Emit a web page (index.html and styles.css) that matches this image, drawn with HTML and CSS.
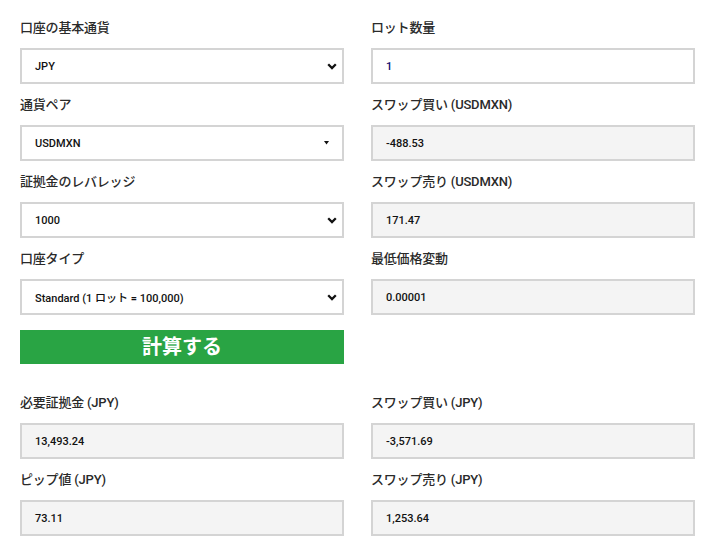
FILE: index.html
```html
<!DOCTYPE html>
<html lang="ja">
<head>
<meta charset="utf-8">
<link rel="stylesheet" href="styles.css">
</head>
<body>
<div class="calc">
  <div class="grid">
    <div class="field">
      <div class="label">口座の基本通貨</div>
      <div class="box select"><span>JPY</span>
        <svg class="chev" width="10" height="7" viewBox="0 0 10 7"><path d="M1.2 1.2 L5 5 L8.8 1.2" fill="none" stroke="#111" stroke-width="2.3"/></svg>
      </div>
    </div>
    <div class="field">
      <div class="label">ロット数量</div>
      <div class="box input"><span class="lot">1</span></div>
    </div>

    <div class="field">
      <div class="label">通貨ペア</div>
      <div class="box select"><span>USDMXN</span>
        <svg class="tri" width="5" height="4" viewBox="0 0 5 4"><path d="M0 0 L5 0 L2.5 3.5 Z" fill="#111"/></svg>
      </div>
    </div>
    <div class="field">
      <div class="label">スワップ買い (USDMXN)</div>
      <div class="box ro"><span>-488.53</span></div>
    </div>

    <div class="field">
      <div class="label">証拠金のレバレッジ</div>
      <div class="box select"><span>1000</span>
        <svg class="chev" width="10" height="7" viewBox="0 0 10 7"><path d="M1.2 1.2 L5 5 L8.8 1.2" fill="none" stroke="#111" stroke-width="2.3"/></svg>
      </div>
    </div>
    <div class="field">
      <div class="label">スワップ売り (USDMXN)</div>
      <div class="box ro"><span>171.47</span></div>
    </div>

    <div class="field">
      <div class="label">口座タイプ</div>
      <div class="box select"><span>Standard (1 ロット = 100,000)</span>
        <svg class="chev" width="10" height="7" viewBox="0 0 10 7"><path d="M1.2 1.2 L5 5 L8.8 1.2" fill="none" stroke="#111" stroke-width="2.3"/></svg>
      </div>
    </div>
    <div class="field">
      <div class="label">最低価格変動</div>
      <div class="box ro"><span>0.00001</span></div>
    </div>

    <button class="calc-btn">計算する</button>
    <div></div>
  </div>

  <div class="grid results">
    <div class="field">
      <div class="label">必要証拠金 (JPY)</div>
      <div class="box ro"><span>13,493.24</span></div>
    </div>
    <div class="field">
      <div class="label">スワップ買い (JPY)</div>
      <div class="box ro"><span>-3,571.69</span></div>
    </div>
    <div class="field">
      <div class="label">ピップ値 (JPY)</div>
      <div class="box ro"><span>73.11</span></div>
    </div>
    <div class="field">
      <div class="label">スワップ売り (JPY)</div>
      <div class="box ro"><span>1,253.64</span></div>
    </div>
  </div>
</div>
</body>
</html>
```
FILE: styles.css
```css
html, body {
  margin: 0;
  padding: 0;
  background: #fff;
}
body {
  font-family: Roboto, "Noto Sans CJK JP", sans-serif;
  color: #222;
}
.calc {
  padding: 7px 0 0 20px;
}
.grid {
  display: grid;
  grid-template-columns: 324px 324px;
  column-gap: 27px;
}
.field {
  display: flex;
  flex-direction: column;
}
.label {
  font-size: 13px;
  font-weight: 500;
  line-height: 22px;
  padding-top: 10px;
  margin-bottom: 9px;
  color: #2a2a2a;
  letter-spacing: -0.2px;
}
.box {
  box-sizing: border-box;
  height: 36px;
  border: 2px solid #d4d4d4;
  padding: 0 5px 0 13px;
  display: flex;
  align-items: center;
  justify-content: space-between;
  font-size: 11px;
  font-weight: 500;
  color: #111;
  background: #fff;
}
.box.ro {
  background: #f4f4f4;
}
.lot {
  color: #0a0a6e;
}
.chev {
  margin-right: 0;
}
.tri {
  margin-right: 8px;
}
.calc-btn {
  margin-top: 15px;
  height: 34px;
  border: 0;
  padding: 0;
  background: #29a444;
  color: #fff;
  font-family: Roboto, "Noto Sans CJK JP", sans-serif;
  font-size: 20px;
  font-weight: 700;
  line-height: 34px;
  cursor: pointer;
}
.results {
  margin-top: 18px;
}
```
